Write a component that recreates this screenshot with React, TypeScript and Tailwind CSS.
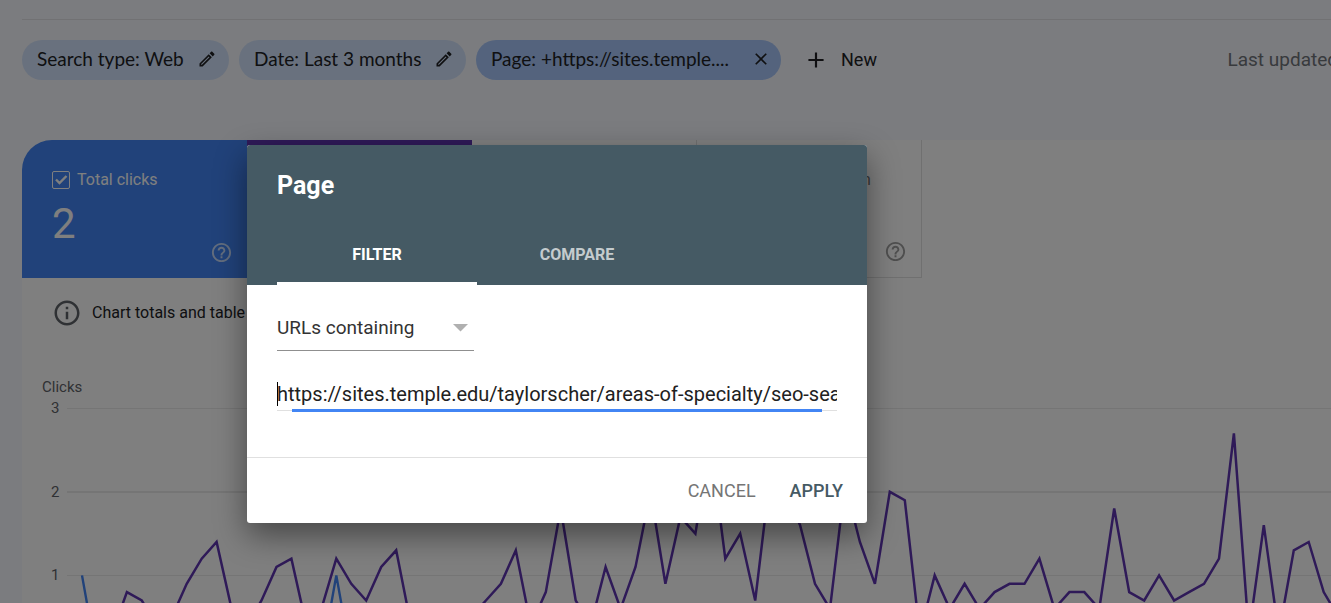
import { useState } from "react";
import type { ReactNode } from "react";
import { MdAdd, MdClose, MdHelpOutline, MdOutlineEdit, MdOutlineInfo } from "react-icons/md";

const STEP = 14.96;
const FIRST_X = 60;
const UNIT = 83.6;
const ZERO_Y = 281;

const impressions = [
  0.3, 0.3, 0.3, 0.8, 0.7, 0.4, 0.5, 0.9, 1.2, 1.4, 0.6, 0.4, 0.7, 1.1, 1.2, 0.4, 0.6, 1.2, 0.9, 0.7,
  1.1, 1.3, 0.4, 0.3, 0.3, 0.4, 0.5, 0.7, 0.9, 1.3, 0.4, 0.8, 1.8, 0.7, 0.4, 1.1, 0.6, 1.1, 2.0, 0.9,
  1.7, 1.5, 2.6, 1.2, 1.5, 0.7, 2.2, 2.0, 1.6, 0.9, 0.6, 2.1, 1.4, 0.9, 2.0, 1.9, 0.3, 1.0, 0.6, 0.9,
  0.6, 0.8, 0.9, 0.9, 1.2, 0.6, 0.8, 0.8, 0.6, 1.8, 0.8, 0.7, 1.0, 0.7, 0.8, 0.9, 1.2, 2.7, 0.3, 1.6,
  0.3, 1.3, 1.4, 0.8, 0.5,
];
const clicks = impressions.map((_, i) => (i === 0 || i === 17 ? 1 : 0));

const toPoints = (values: number[]) =>
  values.map((v, i) => `${(FIRST_X + i * STEP).toFixed(1)},${(ZERO_Y - v * UNIT).toFixed(1)}`).join(" ");

function Chip({ label, className, icon }: { label: string; className: string; icon: ReactNode }) {
  return (
    <button
      type="button"
      className={`flex h-10 shrink-0 items-center justify-between rounded-full pb-0.5 pl-[15px] pr-3 font-['Lato',sans-serif] text-[19px] text-[#202124] ${className}`}
    >
      <span className="whitespace-nowrap">{label}</span>
      {icon}
    </button>
  );
}

function Metric({
  label,
  value,
  checked = false,
  className,
}: {
  label?: string;
  value?: string;
  checked?: boolean;
  className: string;
}) {
  return (
    <div className={`relative h-[138px] w-[225px] shrink-0 pl-[30px] pt-[28px] ${className}`}>
      {label && (
        <label className="flex items-center gap-[7px] text-base">
          <span className="relative flex">
            <input
              type="checkbox"
              defaultChecked={checked}
              className="peer size-[18px] appearance-none rounded-xs border border-current"
            />
            <svg viewBox="0 0 18 18" className="absolute inset-0 hidden size-[18px] peer-checked:block">
              <path d="M4 8.5l3.5 3.5L14.5 5" fill="none" stroke="currentColor" strokeWidth="2.4" />
            </svg>
          </span>
          {label}
        </label>
      )}
      {value && <p className="mt-3 text-[42px] leading-[40px]">{value}</p>}
      <MdHelpOutline className="absolute bottom-[14px] right-[14px] size-[23px] opacity-70" />
    </div>
  );
}

function Chart() {
  return (
    <svg className="block h-[284px] w-full overflow-hidden" role="img" aria-label="Clicks">
      <g className="fill-[#5f6368] text-[15px]">
        <text x="20" y="14">Clicks</text>
        <text x="29" y="35">3</text>
        <text x="29" y="119">2</text>
        <text x="29" y="202">1</text>
      </g>
      <g className="stroke-[#ebebeb]" strokeWidth="1">
        <line x1="45" x2="100%" y1="30.5" y2="30.5" />
        <line x1="45" x2="100%" y1="114" y2="114" strokeWidth="2" />
        <line x1="45" x2="100%" y1="197.5" y2="197.5" />
      </g>
      <polyline points={toPoints(clicks)} fill="none" stroke="#4285f4" strokeWidth="2.4" />
      <polyline points={toPoints(impressions)} fill="none" stroke="#5e35b1" strokeWidth="2.5" />
    </svg>
  );
}

function PageDialog() {
  const [url, setUrl] = useState("https://sites.temple.edu/taylorscher/areas-of-specialty/seo-search/");
  return (
    <div
      role="dialog"
      aria-labelledby="dialog-title"
      className="w-[620px] overflow-hidden rounded-[3px] bg-white shadow-[0_12px_32px_rgba(0,0,0,0.45)]"
    >
      <header className="bg-[#455a64] px-[30px] pt-[25px]">
        <h2 id="dialog-title" className="text-[25px] font-bold leading-8 text-white">Page</h2>
        <div role="tablist" className="mt-[23px] flex text-base font-bold text-white">
          <button type="button" role="tab" aria-selected="true" className="h-[60px] w-[200px] border-b-[3px] border-white pt-0.5">
            FILTER
          </button>
          <button type="button" role="tab" aria-selected="false" className="h-[60px] w-[200px] border-b-[3px] border-transparent pt-0.5 text-white/70">
            COMPARE
          </button>
        </div>
      </header>

      <div className="px-[30px] pb-[46px] pt-5">
        <div className="relative w-[197px]">
          <select
            aria-label="Match type"
            className="h-[46px] w-full appearance-none border-b border-[#8f8f8f] bg-transparent pt-0.5 text-[19px] text-[#333]"
          >
            <option>URLs containing</option>
          </select>
          <svg viewBox="0 0 15 8" className="pointer-events-none absolute right-[6px] top-[19px] h-2 w-[15px]">
            <path d="M0 0h15L7.5 7.5z" fill="#b0b0b0" />
          </svg>
        </div>
        <div className="relative mt-[29px] border-b border-[#e0e0e0] pb-0.5">
          <input
            aria-label="URL"
            type="text"
            value={url}
            onChange={(e) => setUrl(e.target.value)}
            className="block h-7 w-full bg-transparent text-xl text-[#212121] outline-none"
          />
          <span className="absolute left-0 top-0.5 h-6 w-px bg-black" />
          <span className="absolute -bottom-0.5 left-[15px] right-[15px] h-[3px] bg-[#4285f4]" />
        </div>
      </div>

      <footer className="flex h-[66px] items-center justify-end gap-[34px] border-t border-[#e0e0e0] pr-6 text-lg">
        <button type="button" className="text-[#757575]">CANCEL</button>
        <button type="button" className="font-medium text-[#455a64]">APPLY</button>
      </footer>
    </div>
  );
}

export default function App() {
  return (
    <div className="relative h-screen overflow-hidden bg-[#f7f8fe] pl-[22px] font-['Roboto',sans-serif]">
      <div className="mt-[19px] border-t border-[#e2e3e6]" />
      <nav className="mt-5 flex items-center gap-[10px]">
        <Chip label="Search type: Web" className="min-w-[207px] bg-[#d2e3fc]" icon={<MdOutlineEdit className="size-5" />} />
        <Chip label="Date: Last 3 months" className="min-w-[227px] bg-[#d2e3fc]" icon={<MdOutlineEdit className="size-5" />} />
        <Chip
          label="Page: +https://sites.temple...."
          className="min-w-[305px] bg-[#a8c7fa]"
          icon={<MdClose className="-mr-0.5 size-5" />}
        />
        <button type="button" className="ml-3 flex items-center gap-3 text-lg text-[#202124]">
          <MdAdd className="size-[26px]" />
          New
        </button>
        <span className="-mr-6 ml-auto whitespace-nowrap pr-[17px] text-[19px] text-[#70757a]">Last updated</span>
      </nav>

      <main className="mt-[60px] overflow-hidden rounded-tl-[30px] bg-white">
        <section className="flex">
          <Metric label="Total clicks" value="2" checked className="bg-[#4285f4] text-white" />
          <Metric className="bg-[#5e35b1] text-white" />
          <Metric className="border-b border-r border-[#e0e0e0] text-[#757575]" />
          <Metric label="Average position" className="border-b border-r border-[#e0e0e0] text-[#757575]" />
        </section>
        <div className="flex h-[70px] items-center gap-[10px] pl-[30px] text-base text-[#202124]">
          <MdOutlineInfo className="size-[30px] text-[#5f6368]" />
          Chart totals and table
        </div>
        <div className="mt-[30px]">
          <Chart />
        </div>
      </main>

      <div className="absolute inset-0 bg-black/50 pl-[247px] pt-[145px]">
        <PageDialog />
      </div>
    </div>
  );
}
